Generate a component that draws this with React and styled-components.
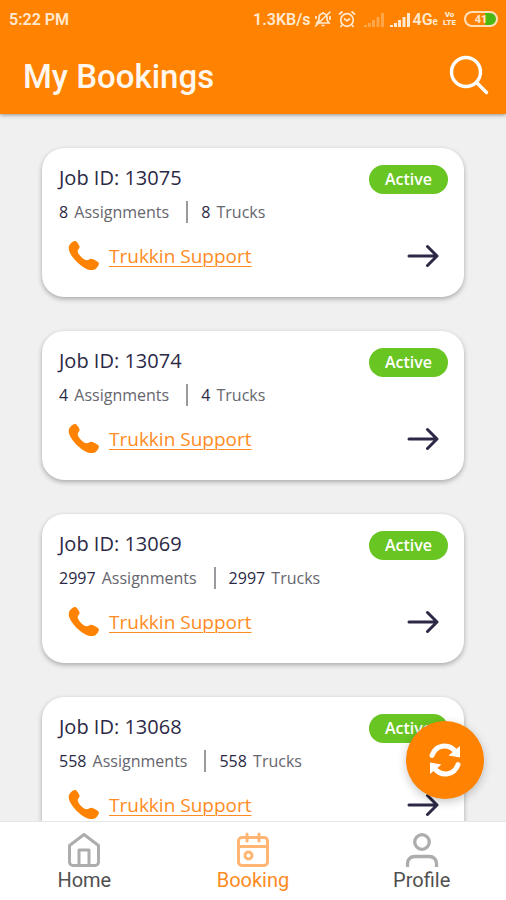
import React from "react";
import styled, { createGlobalStyle } from "styled-components";

const GlobalStyle = createGlobalStyle`
  *, *::before, *::after { box-sizing: border-box; }
  body { margin: 0; background: #f0f0f0; }
  button { border: 0; padding: 0; background: none; font: inherit; color: inherit; cursor: pointer; }
  svg { display: block; flex: none; }
`;

const orange = "#ff8200";
const navy = "#2b2945";

const Screen = styled.div`
  position: relative;
  display: flex;
  flex-direction: column;
  height: 100vh;
  background: #f0f0f0;
  font-family: "Open Sans", "Noto Sans", sans-serif;
  color: ${navy};
`;

const Header = styled.header`
  position: relative;
  z-index: 1;
  flex: none;
  background: ${orange};
  color: #fff7ee;
  font-family: Roboto, sans-serif;
  box-shadow: 0 1px 4px rgba(0, 0, 0, 0.4);
`;

const StatusBar = styled.div`
  display: flex;
  justify-content: space-between;
  align-items: center;
  height: 38px;
  padding: 0 8px 0 9px;
  font-size: 16px;
  font-weight: 600;
  color: #ffe9d0;
`;

const StatusGroup = styled.div`
  display: flex;
  align-items: center;
`;

const Speed = styled.span`
  margin-right: 3px;
`;

const SignalIcon = styled.svg`
  margin-left: ${(p) => p.$gap}px;
  opacity: ${(p) => (p.$dim ? 0.35 : 1)};
`;

const Network = styled.span`
  margin-left: 3px;

  small { font-size: 10px; }
`;

const Volte = styled.span`
  display: grid;
  margin: 0 8px 0 5px;
  font-size: 8px;
  line-height: 8px;
  font-weight: 900;
  text-align: center;
`;

const Battery = styled.span`
  display: flex;
  align-items: center;
  justify-content: center;
  width: 34px;
  height: 16px;
  border: 2px solid #ffe0b8;
  border-radius: 8px;
  background: linear-gradient(90deg, transparent 64%, #4cb814 64%);
  font-size: 11px;
  font-weight: 700;
`;

const TitleBar = styled.div`
  display: flex;
  align-items: center;
  justify-content: space-between;
  height: 76px;
  padding: 0 17px 2px 23px;
`;

const Title = styled.h1`
  margin: 0;
  padding-top: 4px;
  font-size: 33px;
  line-height: 40px;
  font-weight: 500;
`;

const List = styled.main`
  flex: 1;
  min-height: 0;
  overflow: hidden;
  display: flex;
  flex-direction: column;
  gap: 34px;
  padding: 34px 42px 0;
`;

const Card = styled.article`
  flex: none;
  padding: 14px 16px 20px 17px;
  border-radius: 22px;
  background: #fff;
  box-shadow: 0 2px 5px rgba(0, 0, 0, 0.3);
`;

const CardHead = styled.div`
  display: flex;
  align-items: flex-end;
  justify-content: space-between;
  height: 32px;
`;

const JobTitle = styled.h2`
  margin: 0;
  font-size: 20px;
  line-height: 32px;
  font-weight: 500;
`;

const Badge = styled.span`
  padding: 0 16px;
  border-radius: 15px;
  background: #68c522;
  color: #fff;
  font-size: 16px;
  line-height: 29px;
  font-weight: 600;
`;

const Stats = styled.div`
  display: flex;
  align-items: center;
  height: 36px;
  font-size: 16px;
  color: #66666e;
`;

const Stat = styled.span`
  & + & {
    margin-left: 17px;
    padding-left: 13px;
    border-left: 2px solid #9a9a9e;
  }
`;

const Count = styled.b`
  margin-right: 2px;
  font-weight: 500;
  color: ${navy};
`;

const CardFoot = styled.div`
  display: flex;
  align-items: center;
  justify-content: space-between;
  height: 47px;
  padding: 4px 9px 0 9px;
`;

const Support = styled.a`
  display: flex;
  align-items: center;
  gap: 9px;
  color: #ff8b23;
  font-size: 19px;
  line-height: 28px;
  text-underline-offset: 3px;
  text-decoration-thickness: 1px;
`;

const Refresh = styled.button`
  position: absolute;
  right: 22px;
  bottom: 101px;
  z-index: 2;
  display: grid;
  place-items: center;
  width: 78px;
  height: 78px;
  border-radius: 50%;
  && { background: ${orange}; }
  box-shadow: 0 3px 10px rgba(0, 0, 0, 0.22);
`;

const Nav = styled.nav`
  position: relative;
  z-index: 1;
  flex: none;
  display: grid;
  grid-template-columns: repeat(3, 1fr);
  height: 79px;
  background: #fff;
  border-top: 1px solid #e6e6e6;
  font-family: Roboto, sans-serif;
`;

const NavItem = styled.button`
  && { color: ${(p) => (p.$active ? "#ff8b1e" : "#505050")}; }
  display: flex;
  flex-direction: column;
  align-items: center;
  padding-top: 10px;
  font-size: 20px;
  line-height: 24px;

  svg { color: ${(p) => (p.$active ? "#ffb573" : "#adadad")}; }
`;

const MuteIcon = () => (
  <svg width="18" height="18" viewBox="0 0 18 18" fill="none" stroke="currentColor" strokeWidth="1.700" aria-hidden="true">
    <path d="M3 13h12l-2-3V7.500a4 4 0 0 0-8 0V10zM7.500 15.500h3M9 3.500V2M1 16.500 16.500 1.500M16 6v4M2 6v3" />
  </svg>
);

const AlarmIcon = () => (
  <SignalIcon $gap={6} width="18" height="18" viewBox="0 0 18 18" fill="none" stroke="currentColor" strokeWidth="1.700" aria-hidden="true">
    <circle cx="9" cy="10" r="6.300" />
    <path d="m1 4.500 3.500-3M17 4.500l-3.500-3M6 8.500l3 2.500 3-2.500M4 15l-1.500 2M14 15l1.500 2" />
  </SignalIcon>
);

const Signal = ({ dim, gap }) => (
  <SignalIcon $dim={dim} $gap={gap} width="20" height="15" viewBox="0 0 20 15" fill="currentColor" aria-hidden="true">
    <path d="M0 13h3v2H0zM4 11h3v4H4zM8 8h3v7H8zM12.500 5h3v10h-3zM17 1h3v14h-3z" />
  </SignalIcon>
);

const SearchIcon = () => (
  <svg width="40" height="40" viewBox="0 0 40 40" fill="none" stroke="#fff" strokeWidth="3.400" strokeLinecap="round" aria-hidden="true">
    <circle cx="17" cy="17" r="14.500" />
    <path d="m27.500 27.500 10 10" />
  </svg>
);

const PhoneIcon = () => (
  <svg width="32" height="32" viewBox="0 0 32 32" fill={orange} aria-hidden="true">
    <path d="M1.500 5C3.500 2 6 .6 7.500 1c1.500.5 3.800 4.300 4.100 5.700.3 1.500-2.300 3.100-1.900 4.700.7 3.600 5.400 8.100 8.800 8.900 1.800.4 3.300-1.800 4.900-1.500 1.600.3 6.300 2.600 7.400 4.100.6 1.200-1 4.300-3.200 6-2.200 1.600-6.400 1.600-10-.5C11.600 25.400 5.100 18.900 2 12.900.6 10 .2 7.300 1.500 5z" />
  </svg>
);

const ArrowIcon = () => (
  <svg width="32" height="24" viewBox="0 0 32 24" fill="none" stroke={navy} strokeWidth="3" strokeLinecap="round" strokeLinejoin="round" aria-hidden="true">
    <path d="M2 12h28M20.500 2.500 30 12l-9.500 9.500" />
  </svg>
);

const RefreshIcon = () => (
  <svg width="34" height="36" viewBox="0 0 34 36" fill="none" stroke="#fff" strokeWidth="5" aria-hidden="true">
    <path d="M4 13.500C7.500 3 20 .8 27.500 9.500M30 22.500C26.500 33 14 35.200 6.500 26.500" strokeLinecap="round" />
    <path d="M32 4v11.500L20.500 13.500zM2 32V20.500l11.500 2z" fill="#fff" stroke="none" />
  </svg>
);

const HomeIcon = () => (
  <svg width="34" height="36" viewBox="0 0 34 36" fill="none" stroke="currentColor" strokeWidth="3" strokeLinejoin="round" aria-hidden="true">
    <path d="M2.500 13.500 17 2.500l14.500 11V30a3.500 3.500 0 0 1-3.500 3.500H6A3.500 3.500 0 0 1 2.500 30zM12 33V18h10v15" />
  </svg>
);

const CalendarIcon = () => (
  <svg width="34" height="36" viewBox="0 0 34 36" fill="none" stroke="currentColor" strokeWidth="3" strokeLinecap="round" aria-hidden="true">
    <rect x="2.500" y="5.500" width="29" height="28" rx="3.500" />
    <path d="M3 14.500h28M11 2v7M23 2v7" />
    <circle cx="12.500" cy="23.500" r="3.500" />
  </svg>
);

const ProfileIcon = () => (
  <svg width="34" height="36" viewBox="0 0 34 36" fill="none" stroke="currentColor" strokeWidth="3.300" aria-hidden="true">
    <circle cx="17" cy="10" r="7.300" />
    <path d="M2.500 35v-3.500c0-4 3-7 7-7h15c4 0 7 3 7 7V35" />
  </svg>
);

const jobs = [
  { id: 13075, count: 8 },
  { id: 13074, count: 4 },
  { id: 13069, count: 2997 },
  { id: 13068, count: 558 },
];

const JobCard = ({ id, count }) => (
  <Card>
    <CardHead>
      <JobTitle>Job ID: {id}</JobTitle>
      <Badge>Active</Badge>
    </CardHead>
    <Stats>
      <Stat><Count>{count}</Count> Assignments</Stat>
      <Stat><Count>{count}</Count> Trucks</Stat>
    </Stats>
    <CardFoot>
      <Support href="#support"><PhoneIcon />Trukkin Support</Support>
      <button type="button" aria-label={`Open job ${id}`}><ArrowIcon /></button>
    </CardFoot>
  </Card>
);

export default function App() {
  return (
    <Screen>
      <GlobalStyle />
      <Header>
        <StatusBar>
          <span>5:22 PM</span>
          <StatusGroup>
            <Speed>1.3KB/s</Speed>
            <MuteIcon />
            <AlarmIcon />
            <Signal dim gap={8} />
            <Signal gap={6} />
            <Network>4G<small>e</small></Network>
            <Volte><span>Vo</span><span>LTE</span></Volte>
            <Battery>41</Battery>
          </StatusGroup>
        </StatusBar>
        <TitleBar>
          <Title>My Bookings</Title>
          <button type="button" aria-label="Search"><SearchIcon /></button>
        </TitleBar>
      </Header>
      <List>
        {jobs.map((job) => <JobCard key={job.id} {...job} />)}
      </List>
      <Refresh type="button" aria-label="Refresh"><RefreshIcon /></Refresh>
      <Nav>
        <NavItem type="button"><HomeIcon />Home</NavItem>
        <NavItem type="button" $active aria-current="page"><CalendarIcon />Booking</NavItem>
        <NavItem type="button"><ProfileIcon />Profile</NavItem>
      </Nav>
    </Screen>
  );
}
